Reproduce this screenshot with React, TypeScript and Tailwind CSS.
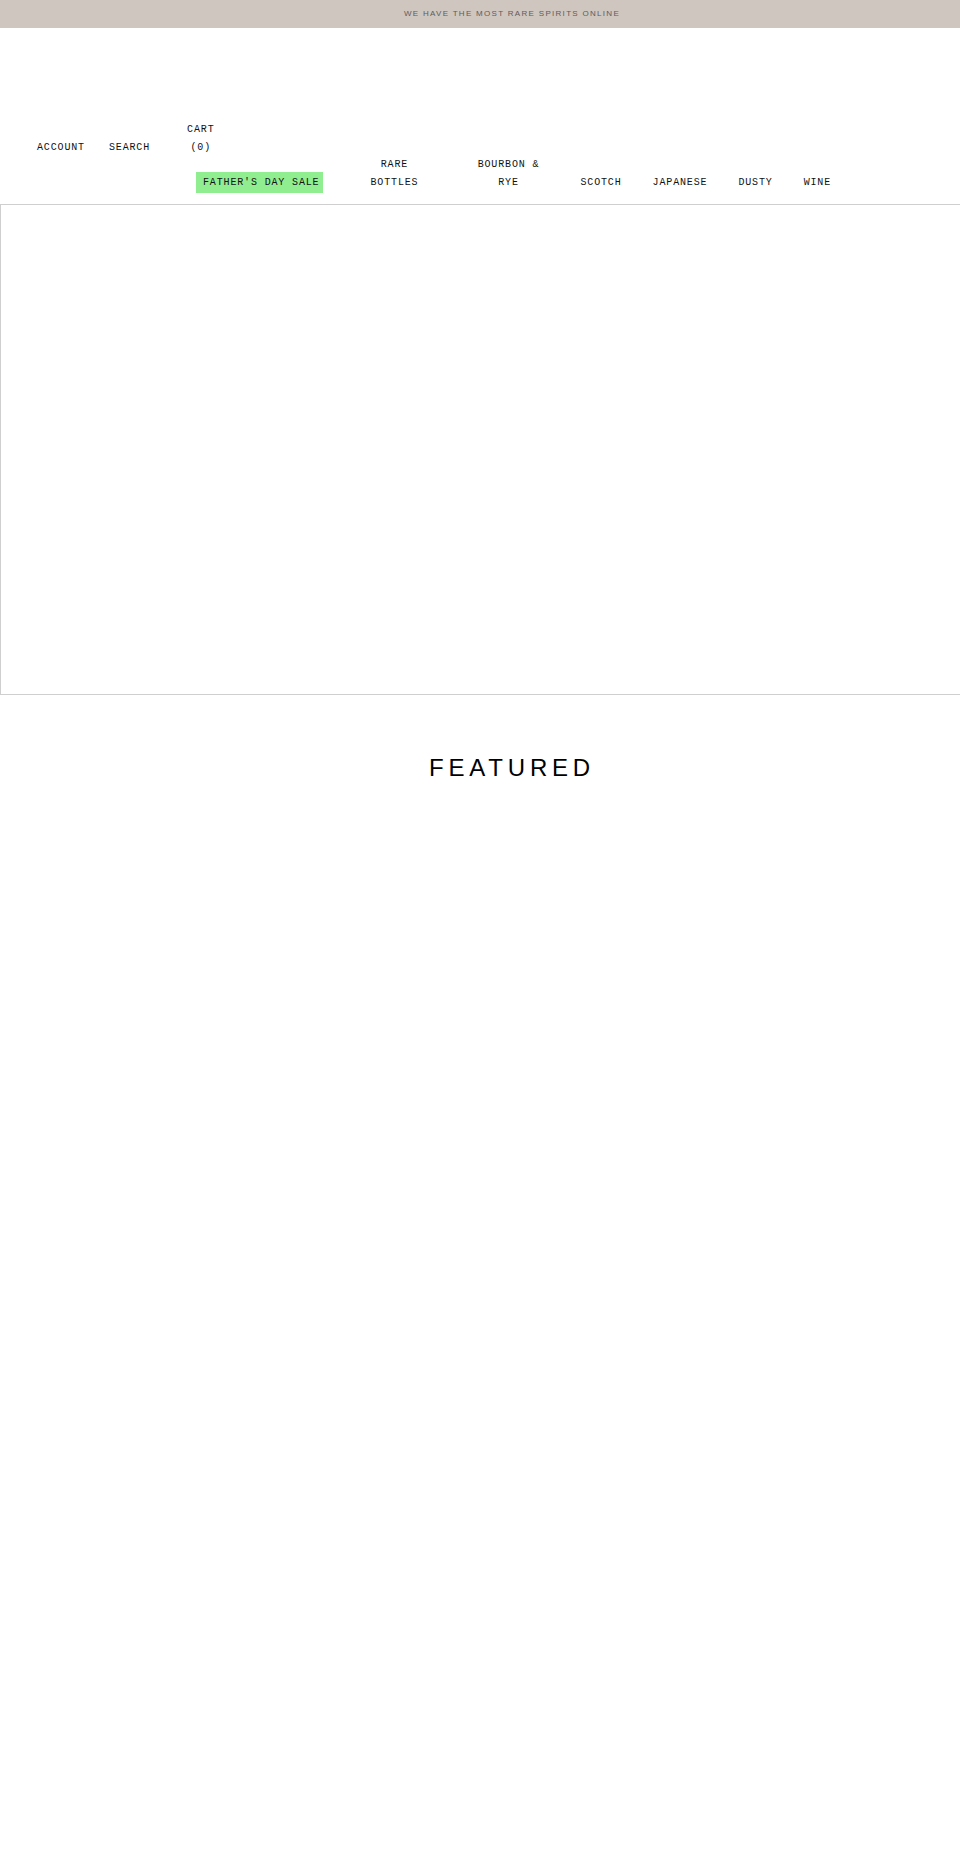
const utility = ["ACCOUNT", "SEARCH"];

// main categories; two-line labels are broken by hand so the widths stay fixed
const categories: { lines: string[]; cls: string }[] = [
  { lines: ["RARE", "BOTTLES"], cls: "w-[84px] ml-[29px]" },
  { lines: ["BOURBON &", "RYE"], cls: "w-[84px] ml-[30px]" },
  { lines: ["SCOTCH"], cls: "ml-[30px]" },
  { lines: ["JAPANESE"], cls: "ml-[31px]" },
  { lines: ["DUSTY"], cls: "ml-[31px]" },
  { lines: ["WINE"], cls: "ml-[31px]" },
];

const mono = "font-['Liberation_Mono',monospace] text-[10px] leading-[18px] tracking-[0.85px] text-[#111]";

function AnnouncementBar() {
  return (
    <div className="h-[28px] flex items-center justify-center bg-[#cfc6c0]">
      <p className="font-['Liberation_Sans',Arial,sans-serif] text-[8px] leading-none tracking-[1.3px] text-[#625a58]">
        WE HAVE THE MOST RARE SPIRITS ONLINE
      </p>
    </div>
  );
}

function Header() {
  return (
    <header className="pt-[93px] pb-[11px]">
      {/* account / search / cart */}
      <div className={`flex items-end pl-[37px] ${mono}`}>
        <a className="cursor-pointer">{utility[0]}</a>
        <a className="ml-[24px] cursor-pointer">{utility[1]}</a>
        <a className="ml-[37px] flex flex-col items-center cursor-pointer">
          <span>CART</span>
          <span>(0)</span>
        </a>
      </div>

      {/* category nav */}
      <nav className={`-mt-px flex items-end pl-[196px] ${mono}`}>
        <a className="pl-[7px] pr-[4px] py-[1.5px] bg-[#90ee90] whitespace-nowrap cursor-pointer">
          FATHER'S DAY SALE
        </a>
        {categories.map((c) => (
          <a
            key={c.lines.join(" ")}
            className={`flex flex-col items-center text-center cursor-pointer pb-px ${c.cls}`}
          >
            {c.lines.map((l) => (
              <span key={l} className="whitespace-nowrap">
                {l}
              </span>
            ))}
          </a>
        ))}
      </nav>
    </header>
  );
}

export default function App() {
  return (
    <div className="w-full min-h-[1875px] overflow-hidden bg-white">
      <div className="w-[1024px]">
        <AnnouncementBar />
        <Header />

        {/* hero slot */}
        <section className="h-[491px] border border-[#cfcfcf]" />

        <section className="pt-[61px]">
          <h2 className="text-center font-['Liberation_Sans',Arial,sans-serif] text-[24px] leading-none tracking-[0.2em] text-black">
            FEATURED
          </h2>
        </section>
      </div>
    </div>
  );
}
